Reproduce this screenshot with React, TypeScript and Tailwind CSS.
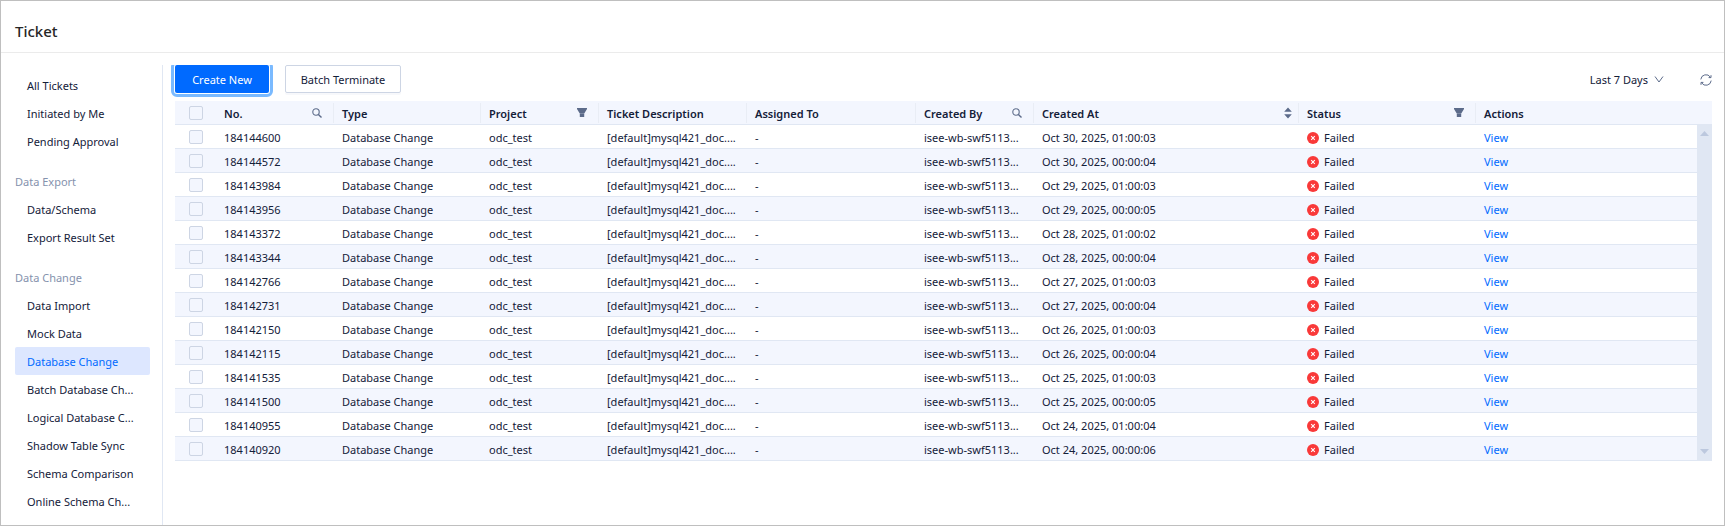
import { useState } from "react";
import clsx from "clsx";

const groups = [
  {
    title: "",
    items: ["All Tickets", "Initiated by Me", "Pending Approval"],
  },
  {
    title: "Data Export",
    items: ["Data/Schema", "Export Result Set"],
  },
  {
    title: "Data Change",
    items: [
      "Data Import",
      "Mock Data",
      "Database Change",
      "Batch Database Ch...",
      "Logical Database C...",
      "Shadow Table Sync",
      "Schema Comparison",
      "Online Schema Ch...",
    ],
  },
];

const tickets = [
  { no: "184144600", createdAt: "Oct 30, 2025, 01:00:03" },
  { no: "184144572", createdAt: "Oct 30, 2025, 00:00:04" },
  { no: "184143984", createdAt: "Oct 29, 2025, 01:00:03" },
  { no: "184143956", createdAt: "Oct 29, 2025, 00:00:05" },
  { no: "184143372", createdAt: "Oct 28, 2025, 01:00:02" },
  { no: "184143344", createdAt: "Oct 28, 2025, 00:00:04" },
  { no: "184142766", createdAt: "Oct 27, 2025, 01:00:03" },
  { no: "184142731", createdAt: "Oct 27, 2025, 00:00:04" },
  { no: "184142150", createdAt: "Oct 26, 2025, 01:00:03" },
  { no: "184142115", createdAt: "Oct 26, 2025, 00:00:04" },
  { no: "184141535", createdAt: "Oct 25, 2025, 01:00:03" },
  { no: "184141500", createdAt: "Oct 25, 2025, 00:00:05" },
  { no: "184140955", createdAt: "Oct 24, 2025, 01:00:04" },
  { no: "184140920", createdAt: "Oct 24, 2025, 00:00:06" },
];

const SearchIcon = () => (
  <svg width="10" height="10" viewBox="0 0 10 10" fill="none" stroke="#5c6b8a">
    <circle cx="4" cy="4" r="3.2" strokeWidth="1.1" />
    <path d="M6.4 6.4L9.5 9.5" strokeWidth="1.4" />
  </svg>
);

const FilterIcon = () => (
  <svg width="10" height="9" viewBox="0 0 10 9" fill="#5c6b8a">
    <path d="M0 0H10V1L7.4 5.2H2.6L0 1ZM2.8 6H7.2V9H2.8Z" />
    <path d="M2.8 5H7.2V6.2H2.8Z" opacity="0.7" />
  </svg>
);

const SortIcon = () => (
  <svg width="8" height="12" viewBox="0 0 8 12" fill="#5c6b8a">
    <path d="M4 0.5L7.8 4.8H0.2ZM4 11.5L7.8 7.2H0.2Z" />
  </svg>
);

const FailedIcon = () => (
  <svg width="12" height="12" viewBox="0 0 12 12" className="shrink-0">
    <circle cx="6" cy="6" r="6" fill="#f93939" />
    <path d="M4.2 4.2L7.8 7.8M7.8 4.2L4.2 7.8" stroke="#fff" strokeWidth="1.1" />
  </svg>
);

const columns = [
  { title: "No.", width: "w-[118px]", icon: <SearchIcon /> },
  { title: "Type", width: "w-[147px]" },
  { title: "Project", width: "w-[118px]", icon: <FilterIcon /> },
  { title: "Ticket Description", width: "w-[148px]" },
  { title: "Assigned To", width: "w-[169px]" },
  { title: "Created By", width: "w-[118px]", icon: <SearchIcon /> },
  { title: "Created At", width: "w-[265px]", icon: <SortIcon />, sorter: true },
  { title: "Status", width: "w-[177px]", icon: <FilterIcon /> },
  { title: "Actions", width: "", last: true },
];

const Checkbox = ({ label }: { label: string }) => (
  <input
    type="checkbox"
    aria-label={label}
    className="block size-3.5 appearance-none rounded-xs border border-[#cdd5e4] bg-[#f3f6fe] checked:bg-[#006aff]"
  />
);

const Sidebar = () => {
  const [active, setActive] = useState("Database Change");

  return (
    <nav className="flex w-[162px] shrink-0 flex-col gap-3 border-r border-[#e0e7f3] pt-1.5 pr-3 pl-3.5">
      {groups.map((group) => (
        <div key={group.title}>
          {group.title && (
            <h2 className="h-7 leading-[30px] text-[#8592ad]">{group.title}</h2>
          )}
          {group.items.map((item) => (
            <button
              key={item}
              onClick={() => setActive(item)}
              className={clsx(
                "block h-7 w-full truncate rounded-xs px-3 text-left leading-[30px]",
                item === active && "bg-[#dde7ff] text-[#006aff]"
              )}
            >
              {item}
            </button>
          ))}
        </div>
      ))}
    </nav>
  );
};

const Toolbar = () => (
  <div className="flex items-center gap-4">
    <button className="h-7 w-[94px] rounded-xs bg-[#006aff] pt-0.5 text-white outline-3 outline-offset-1 outline-[#7abaff]">
      Create New
    </button>
    <button className="h-7 w-[116px] rounded-xs border border-[#cdd5e4] pt-0.5 shadow-[0_2px_0_#f7f8fb]">
      Batch Terminate
    </button>
    <button className="ml-auto flex items-center gap-1.5 pt-0.5">
      Last 7 Days
      <svg width="10" height="8" viewBox="0 0 10 8" fill="none" stroke="#5c6b8a">
        <path d="M1 0.5L5 6L9 0.5" />
      </svg>
    </button>
    <button aria-label="Refresh" className="ml-5 pt-0.5">
      <svg width="12" height="12" viewBox="0 0 12 12" fill="none" stroke="#5c6b8a">
        <path d="M0.8 5.4A5.2 5.2 0 0 1 10.4 3.2M11.2 6.6A5.2 5.2 0 0 1 1.6 8.8" />
        <path d="M11 1.2V3.6H8.6M1 10.8V8.4H3.4" />
      </svg>
    </button>
  </div>
);

const TicketTable = () => (
  <div className="mt-2 flex">
    <table className="min-w-0 flex-1 table-fixed border-separate border-spacing-0 text-left">
      <colgroup>
        <col className="w-[41px]" />
        {columns.map((col) => (
          <col key={col.title} className={col.width} />
        ))}
      </colgroup>
      <thead>
        <tr className="h-6 bg-[#f3f6fe]">
          <th className="border-b border-[#e0e7f3] p-0 pl-3.5">
            <Checkbox label="Select all" />
          </th>
          {columns.map((col) => (
            <th key={col.title} className="border-b border-[#e0e7f3] p-0 font-semibold">
              <div className="flex h-[23px] items-center">
                <div
                  className={clsx(
                    "flex h-5 flex-1 items-center justify-between pl-2",
                    col.sorter ? "pr-1.5" : "pr-[11px]",
                    !col.last && "border-r border-[#e9edf5]"
                  )}
                >
                  <span className="pt-0.5">{col.title}</span>
                  {col.icon}
                </div>
              </div>
            </th>
          ))}
        </tr>
      </thead>
      <tbody>
        {tickets.map((ticket) => (
          <tr
            key={ticket.no}
            className="h-6 even:bg-[#f3f6fe] [&>td]:truncate [&>td]:border-b [&>td]:border-[#e0e7f3] [&>td]:pt-0.5 [&>td]:pr-2 [&>td]:pb-0 [&>td]:pl-2"
          >
            <td>
              <div className="pb-0.5 pl-1.5">
                <Checkbox label={"Select " + ticket.no} />
              </div>
            </td>
            <td>{ticket.no}</td>
            <td>Database Change</td>
            <td>odc_test</td>
            <td>[default]mysql421_doc....</td>
            <td>-</td>
            <td>isee-wb-swf5113...</td>
            <td>{ticket.createdAt}</td>
            <td>
              <div className="flex items-center gap-[5px]">
                <FailedIcon />
                Failed
              </div>
            </td>
            <td>
              <a href="#" className="text-[#006aff]">
                View
              </a>
            </td>
          </tr>
        ))}
      </tbody>
    </table>
    {/* scroll track */}
    <div className="flex w-[15px] flex-col">
      <div className="h-[23px] bg-[#f3f6fe]" />
      <div className="flex flex-1 flex-col items-center justify-between bg-[#e0e7f3] py-[7px]">
        <svg width="9" height="5" viewBox="0 0 9 5" fill="#bcc8de">
          <path d="M4.5 0L9 5H0Z" />
        </svg>
        <svg width="9" height="5" viewBox="0 0 9 5" fill="#bcc8de">
          <path d="M4.5 5L9 0H0Z" />
        </svg>
      </div>
    </div>
  </div>
);

const App = () => {
  return (
    <div className="flex min-h-screen flex-col border border-[#bfbfbf] bg-white font-['Noto_Sans','Open_Sans',sans-serif] text-[11px] leading-4 text-[#132039]">
      <header className="border-b border-[#ebebeb] pt-[18px] pr-3.5 pb-[9px] pl-3.5">
        <h1 className="text-[15px] leading-6 font-medium text-[#262626]">Ticket</h1>
      </header>
      <div className="mt-3 flex flex-1">
        <Sidebar />
        <main className="min-w-0 flex-1 overflow-hidden px-3">
          <Toolbar />
          <TicketTable />
        </main>
      </div>
    </div>
  );
};

export default App;
